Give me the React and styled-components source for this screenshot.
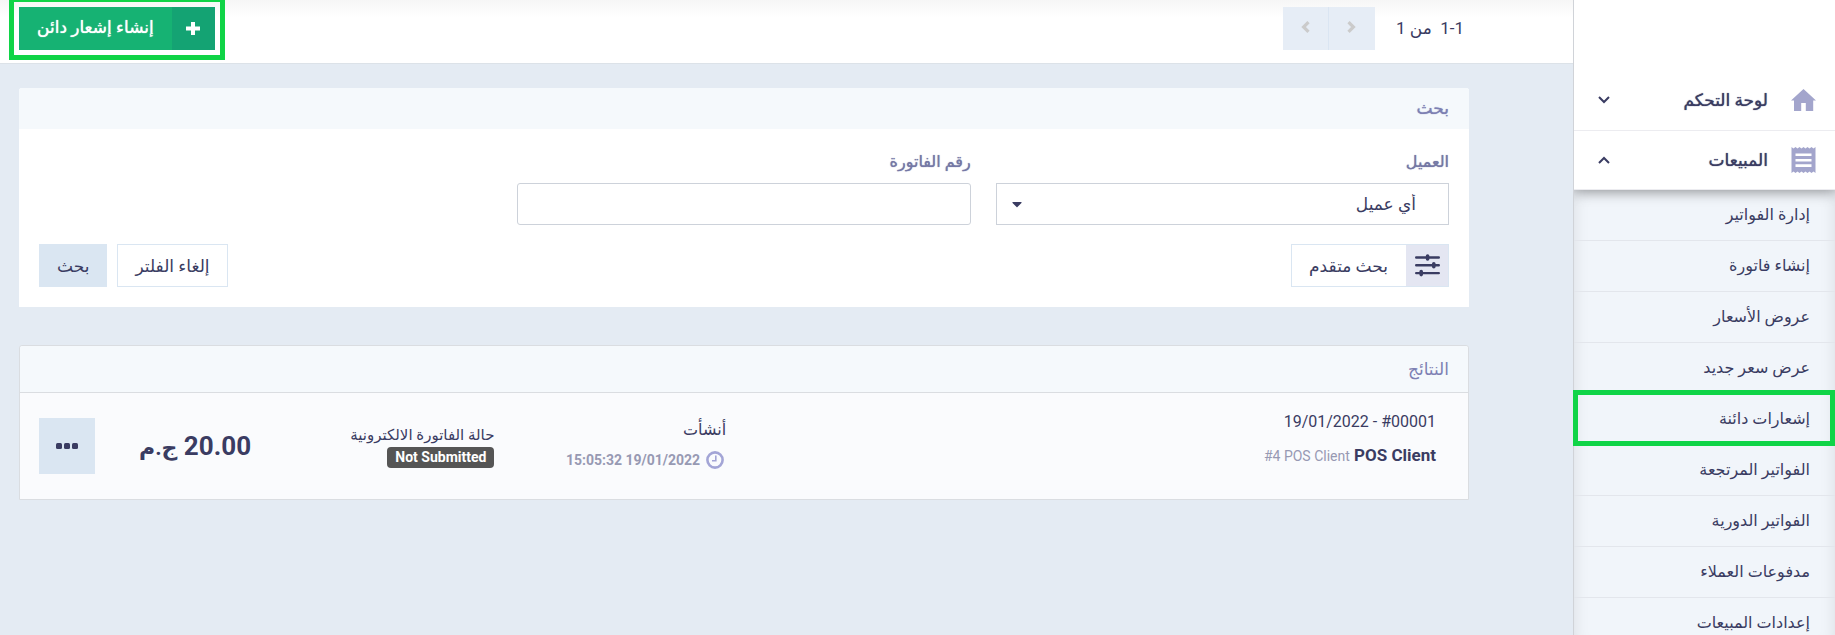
import React, { useState } from 'react';
import styled, { createGlobalStyle, css } from 'styled-components';
import { FaCaretDown } from 'react-icons/fa';

const GlobalStyle = createGlobalStyle`
  * {
    box-sizing: border-box;
  }
  body {
    margin: 0;
    background: #e4ebf3;
  }
  body, button, input, select {
    font-family: Roboto, "DejaVu Sans", sans-serif;
    font-size: 17px;
    color: #3a3c62;
  }
`;

// the arabic face has no medium weight, thicken the regular one a little
const mediumCss = css`
  font-weight: 500;
  text-shadow: 0 0 1px currentColor;
`;

const Page = styled.div`
  display: flex;
  height: 100vh;
  overflow: hidden;
`;

/* sidebar */

const Sidebar = styled.nav`
  flex: none;
  width: 262px;
  padding-top: 70px;
  background: #fff;
  border-left: 1px solid #d0d3d8;
`;

const MenuItem = styled.button`
  display: flex;
  align-items: center;
  gap: 23px;
  width: 100%;
  height: ${props => (props.$open ? '59px' : '61px')};
  padding: 0 19px 0 24px;
  border: 0;
  border-bottom: 1px solid #ececf0;
  background: #fff;
  text-align: right;
  cursor: pointer;
  ${mediumCss};
  ${props => props.$open && css`
    position: relative;
    box-shadow: 0 2px 12px rgba(0, 0, 0, 0.35);
    clip-path: inset(0 0 -20px 0);
  `}
`;

const MenuLabel = styled.span`
  flex: 1;
`;

const SubMenu = styled.ul`
  margin: 0;
  padding: 0;
  list-style: none;
  background: #f1f5fa;
  box-shadow: inset 0 0 16px rgba(0, 0, 0, 0.1);
`;

const SubItem = styled.li`
  border-bottom: 1px solid #e3e6ec;
  ${props => props.$marked && css`
    position: relative;
    &::after {
      content: '';
      position: absolute;
      inset: -4px 0 -2px -1px;
      border: 5px solid #10d447;
      pointer-events: none;
    }
  `}
`;

const SubLink = styled.a`
  display: block;
  padding: 0 25px;
  font-size: 16px;
  line-height: 50px;
  color: #3a3c62;
  text-decoration: none;
`;

/* top bar */

const Main = styled.main`
  flex: 1;
  min-width: 0;
`;

const TopBar = styled.header`
  display: flex;
  align-items: flex-start;
  gap: 21px;
  height: 64px;
  padding: 7px 109px 0 19px;
  background: linear-gradient(#f6f6f6, #fff 18px);
  border-bottom: 1px solid #dce2e8;
`;

const PageCount = styled.span`
  line-height: 43px;
  white-space: pre;
`;

const Pager = styled.div`
  display: flex;
`;

const PagerButton = styled.button`
  display: flex;
  align-items: center;
  justify-content: center;
  width: 46px;
  height: 43px;
  padding: 0 0 4px;
  border: 0;
  background: #e6edf6;
  & + & {
    border-right: 1px solid #dae5f2;
  }
`;

const CreateButton = styled.button`
  display: flex;
  align-items: stretch;
  height: 43px;
  margin-right: auto;
  padding: 0;
  border: 0;
  background: #16b273;
  color: #fff;
  ${mediumCss};
  outline: 5px solid #10d447;
  outline-offset: 5px;
  cursor: pointer;
`;

const CreateIcon = styled.span`
  display: flex;
  align-items: center;
  justify-content: center;
  width: 43px;
  background: #14a373;
`;

const CreateText = styled.span`
  padding: 0 18px;
  line-height: 41px;
`;

/* cards */

const Content = styled.div`
  display: grid;
  gap: 38px;
  padding: 24px 104px 24px 19px;
`;

const Card = styled.section`
  background: ${props => (props.$bordered ? '#fafbfd' : '#fff')};
  border: ${props => (props.$bordered ? '1px solid #dadde1' : '0')};
  border-radius: 3px 3px 0 0;
`;

const CardTitle = styled.h2`
  margin: 0;
  padding: 0 20px;
  background: #f5f9fc;
  border-radius: 3px 3px 0 0;
  color: #7d80b3;
  font-size: 17px;
  line-height: 41px;
  ${mediumCss};
  ${props => props.$light && css`
    padding: 0 19px;
    border-bottom: 1px solid #dadde1;
    font-weight: normal;
    line-height: 46px;
    text-shadow: none;
  `}
`;

const SearchForm = styled.form`
  padding: 20px;
`;

const Fields = styled.div`
  display: grid;
  grid-template-columns: repeat(3, 1fr);
  gap: 25px;
`;

const Field = styled.div`
  display: flex;
  flex-direction: column;
`;

const Label = styled.label`
  height: 34px;
  line-height: 26px;
  font-size: 16px;
  color: #7578a5;
  ${mediumCss};
`;

const controlCss = css`
  width: 100%;
  height: 42px;
  border: 1px solid #cdd2da;
  background: #fff;
  border-radius: 0;
`;

const Input = styled.input`
  ${controlCss};
  padding: 0 12px;
  border-radius: 3px;
`;

const SelectWrap = styled.div`
  position: relative;
  svg {
    position: absolute;
    left: 13px;
    top: 13px;
    pointer-events: none;
  }
`;

const Select = styled.select`
  ${controlCss};
  padding: 0 32px;
  appearance: none;
`;

const Actions = styled.div`
  display: flex;
  gap: 10px;
  margin-top: 19px;
`;

const Button = styled.button`
  display: flex;
  align-items: center;
  height: 43px;
  padding: 0 17px;
  border: 1px solid #dae6f2;
  background: ${props => (props.$filled ? '#dae6f2' : '#fff')};
  cursor: pointer;
`;

const AdvancedButton = styled(Button)`
  gap: 18px;
  margin-left: auto;
  padding-right: 0;
`;

const AdvancedIcon = styled.span`
  display: flex;
  align-items: center;
  justify-content: center;
  width: 42px;
  height: 41px;
  background: #e4e6f2;
`;

/* results */

const ResultRow = styled.article`
  display: grid;
  grid-template-columns: 67fr 22fr 23fr auto;
  height: 106px;
  padding: 0 32px 0 19px;
`;

const ClientCell = styled.div`
  padding-top: 16px;
`;

const Line = styled.div`
  line-height: 26px;
  font-size: 16px;
`;

const ClientName = styled.div`
  margin-top: 7px;
  line-height: 26px;
  font-weight: bold;
`;

const Small = styled.small`
  color: #9799b3;
  font-size: 14px;
  font-weight: normal;
`;

const CreatedCell = styled.div`
  padding: 24px 1px 0 0;
`;

const CreatedTime = styled.div`
  display: flex;
  align-items: center;
  gap: 6px;
  height: 34px;
  padding-right: 2px;
  color: #9799b3;
  font-size: 14px;
  font-weight: bold;
`;

const StatusCell = styled.div`
  padding-top: 31px;
`;

const StatusLabel = styled.div`
  font-size: 15px;
  line-height: 22px;
`;

const Badge = styled.span`
  display: inline-block;
  padding: 0 8px;
  border-radius: 4px;
  background: #555;
  color: #fff;
  font-size: 14px;
  font-weight: bold;
  line-height: 21px;
`;

const AmountCell = styled.div`
  display: flex;
  align-items: center;
  gap: 44px;
`;

const Amount = styled.strong`
  font-size: 26px;
`;

const Currency = styled.span`
  font-size: 22px;
`;

const MoreButton = styled.button`
  display: flex;
  align-items: center;
  justify-content: center;
  width: 56px;
  height: 56px;
  border: 0;
  background: #dae6f2;
  cursor: pointer;
`;

const HomeIcon = () => (
  <svg width="25" height="22" viewBox="0 0 25 22" fill="#a3a5cc">
    <path d="M12.5 0 25 11.5h-2.8V22h-7.4v-8h-4.6v8H3V11.500H0z" />
  </svg>
);

const ReceiptIcon = () => (
  <svg width="25" height="26" viewBox="0 0 25 26">
    <path
      fill="#a3a5cc"
      d="M.5 0l2 1.500 2-1.500 2 1.500 2-1.500 2 1.500 2-1.500 2 1.500 2-1.500 2 1.500 2-1.500 2 1.500 2-1.500V26l-2-1.500-2 1.500-2-1.500-2 1.500-2-1.500-2 1.500-2-1.500-2 1.500-2-1.500-2 1.500-2-1.500-2 1.500z"
    />
    <path stroke="#fff" strokeWidth="2.600" d="M4.500 7.800h16M4.500 13.200h16M4.500 18.600h16" />
  </svg>
);

const Arrow = ({ up }) => (
  <svg width="12" height="8" viewBox="0 0 12 8" fill="none" stroke="#3a3c62" strokeWidth="2">
    <path d={up ? 'M1 7l5-5 5 5' : 'M1 1l5 5 5-5'} />
  </svg>
);

const PlusIcon = () => (
  <svg width="14" height="13" viewBox="0 0 14 13" fill="none" stroke="#fff" strokeWidth="4">
    <path d="M0 6.500h14M7 0v13" />
  </svg>
);

const Chevron = ({ left }) => (
  <svg width="9" height="12" viewBox="0 0 9 12" fill="none" stroke="#cbcbcb" strokeWidth="3.200">
    <path d={left ? 'M7.500 1.200L2.600 6l4.900 4.800' : 'M1.500 1.200L6.400 6l-4.900 4.800'} />
  </svg>
);

const SlidersIcon = () => (
  <svg width="25" height="23" viewBox="0 0 25 23" fill="none" stroke="#3a3c62">
    <path strokeWidth="2.400" strokeLinecap="round" d="M1.200 3.500h22.600M1.200 11.300h22.600M1.200 19.100h22.600" />
    <path strokeWidth="3.600" strokeLinecap="round" d="M12.600 2v3M18.800 9.800v3M6.200 17.600v3" />
  </svg>
);

const ClockIcon = () => (
  <svg width="18" height="18" viewBox="0 0 18 18" fill="none" stroke="#a3a5d6">
    <circle cx="9" cy="9" r="7.600" strokeWidth="2.600" />
    <path strokeWidth="1.600" d="M9.800 4.500v5.300H6" />
  </svg>
);

const DotsIcon = () => (
  <svg width="22" height="6" viewBox="0 0 22 6" fill="#3a3c62">
    <rect width="6" height="6" rx="1.500" />
    <rect x="8" width="6" height="6" rx="1.500" />
    <rect x="16" width="6" height="6" rx="1.500" />
  </svg>
);

const salesLinks = [
  'إدارة الفواتير',
  'إنشاء فاتورة',
  'عروض الأسعار',
  'عرض سعر جديد',
  'إشعارات دائنة',
  'الفواتير المرتجعة',
  'الفواتير الدورية',
  'مدفوعات العملاء',
  'إعدادات المبيعات',
];

function App() {
  const [invoice, setInvoice] = useState('');

  return (
    <Page dir="rtl" lang="ar">
      <GlobalStyle />
      <Sidebar>
        <MenuItem type="button">
          <HomeIcon />
          <MenuLabel>لوحة التحكم</MenuLabel>
          <Arrow />
        </MenuItem>
        <MenuItem type="button" $open aria-expanded="true">
          <ReceiptIcon />
          <MenuLabel>المبيعات</MenuLabel>
          <Arrow up />
        </MenuItem>
        <SubMenu>
          {salesLinks.map(text => (
            <SubItem key={text} $marked={text === 'إشعارات دائنة'}>
              <SubLink href="#">{text}</SubLink>
            </SubItem>
          ))}
        </SubMenu>
      </Sidebar>

      <Main>
        <TopBar>
          <PageCount><bdi dir="ltr">1-1</bdi>{'  '}من 1</PageCount>
          <Pager>
            <PagerButton type="button" aria-label="السابق"><Chevron /></PagerButton>
            <PagerButton type="button" aria-label="التالي"><Chevron left /></PagerButton>
          </Pager>
          <CreateButton type="button">
            <CreateIcon><PlusIcon /></CreateIcon>
            <CreateText>إنشاء إشعار دائن</CreateText>
          </CreateButton>
        </TopBar>

        <Content>
          <Card>
            <CardTitle>بحث</CardTitle>
            <SearchForm onSubmit={e => e.preventDefault()}>
              <Fields>
                <Field>
                  <Label htmlFor="client">العميل</Label>
                  <SelectWrap>
                    <Select id="client">
                      <option>أي عميل</option>
                    </Select>
                    <FaCaretDown size={16} />
                  </SelectWrap>
                </Field>
                <Field>
                  <Label htmlFor="invoice">رقم الفاتورة</Label>
                  <Input id="invoice" value={invoice} onChange={e => setInvoice(e.target.value)} />
                </Field>
              </Fields>
              <Actions>
                <AdvancedButton type="button">
                  <AdvancedIcon><SlidersIcon /></AdvancedIcon>
                  بحث متقدم
                </AdvancedButton>
                <Button type="button" onClick={() => setInvoice('')}>إلغاء الفلتر</Button>
                <Button type="submit" $filled>بحث</Button>
              </Actions>
            </SearchForm>
          </Card>

          <Card $bordered>
            <CardTitle $light>النتائج</CardTitle>
            <ResultRow>
              <ClientCell>
                <Line><bdi dir="ltr">19/01/2022 - #00001</bdi></Line>
                <ClientName>
                  <bdi>POS Client</bdi> <Small><bdi dir="ltr">#4 POS Client</bdi></Small>
                </ClientName>
              </ClientCell>
              <CreatedCell>
                <Line>أنشأت</Line>
                <CreatedTime>
                  <ClockIcon />
                  <bdi dir="ltr">15:05:32 19/01/2022</bdi>
                </CreatedTime>
              </CreatedCell>
              <StatusCell>
                <StatusLabel>حالة الفاتورة الالكترونية</StatusLabel>
                <Badge>Not Submitted</Badge>
              </StatusCell>
              <AmountCell>
                <Amount>20.00 <Currency>ج.م</Currency></Amount>
                <MoreButton type="button" aria-label="المزيد"><DotsIcon /></MoreButton>
              </AmountCell>
            </ResultRow>
          </Card>
        </Content>
      </Main>
    </Page>
  );
}

export default App;
